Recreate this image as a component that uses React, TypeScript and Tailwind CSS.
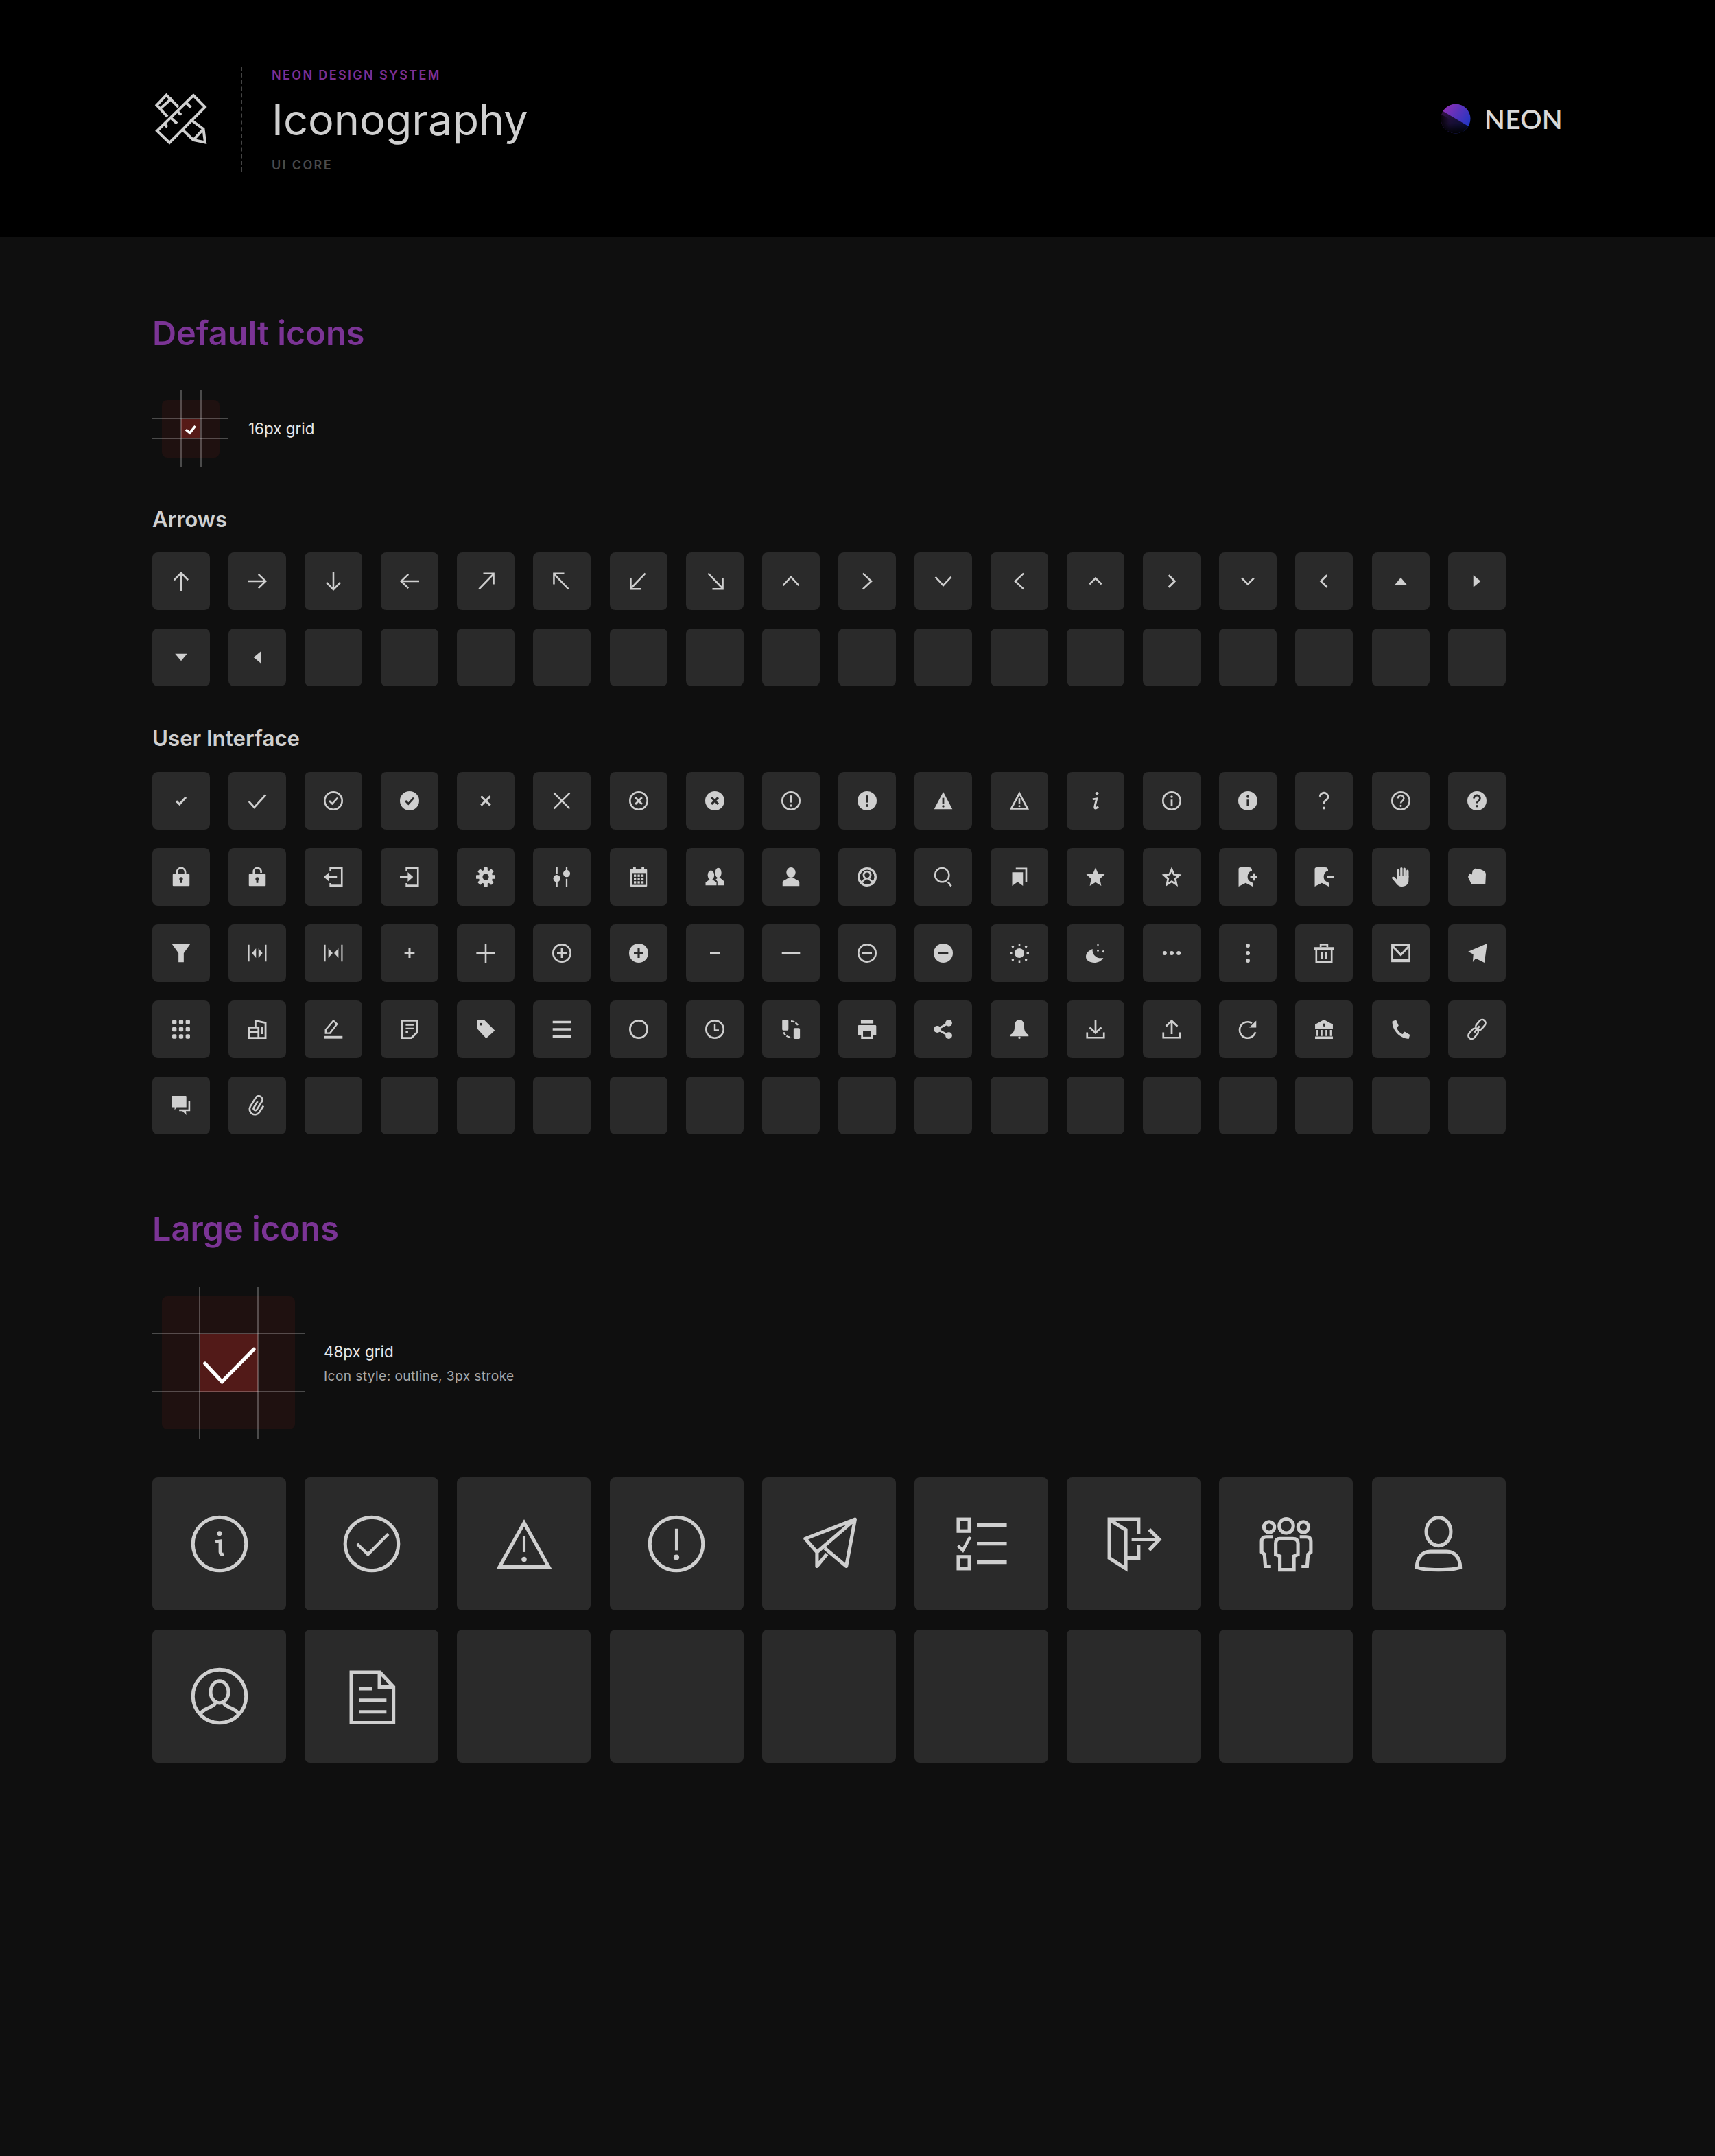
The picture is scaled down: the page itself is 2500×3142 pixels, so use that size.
import type { ReactNode } from "react";

const DARK = "#2a2a2a";
const fill = { fill: "currentColor", stroke: "none" };
const dark = { fill: DARK, stroke: "none" };

const Ring = () => <circle cx="8" cy="8" r="7.25" strokeWidth="1.5" />;
const Solid = () => <circle cx="8" cy="8" r="8" {...fill} />;

const star = "8,.3 10.2,5.3 15.7,5.9 11.6,9.6 12.8,15.4 8,12.4 3.2,15.4 4.4,9.6 .3,5.9 5.8,5.3";
const bookmarkCut = "M.3 16V1.5Q.3 0 2 0H9Q11.5 0 11.5 2.8C8.5 3.5 7.8 6 7.8 8C7.8 10.5 9.5 12 12 12.8V16L6.2 13Z";
const lockBody = <rect x="1" y="5.6" width="14" height="10" rx=".6" {...fill} />;
const keyhole = (
  <>
    <circle cx="8" cy="9.6" r="1.5" {...dark} />
    <rect x="7.2" y="10" width="1.6" height="3" {...dark} />
  </>
);

const arrowIcons: ReactNode[] = [
  <path d="M8 16V1M2.2 7L8 1L13.8 7" />,
  <path d="M0 8H15M9 2.2L15 8L9 13.8" />,
  <path d="M8 0V15M2.2 9L8 15L13.8 9" />,
  <path d="M16 8H1M7 2.2L1 8L7 13.8" />,
  <path d="M2.5 14.5L14.5 2M6 1.6H14.6V10.5" />,
  <path d="M13.5 14.5L1.5 2M10 1.6H1.4V10.5" />,
  <path d="M13.5 1.5L1.5 14M10 14.4H1.4V5.5" />,
  <path d="M2.5 1.5L14.5 14M6 14.4H14.6V5.5" />,
  <path d="M1.5 11.5L8 4.5L14.5 11.5" />,
  <path d="M4.5 1.5L11.5 8L4.5 14.5" />,
  <path d="M1.5 4.5L8 11.5L14.5 4.5" />,
  <path d="M11.5 1.5L4.5 8L11.5 14.5" />,
  <path d="M3 10.5L8 5.5L13 10.5" strokeWidth="1.6" />,
  <path d="M5.5 3L10.5 8L5.5 13" strokeWidth="1.6" />,
  <path d="M3 5.5L8 10.5L13 5.5" strokeWidth="1.6" />,
  <path d="M10.5 3L5.5 8L10.5 13" strokeWidth="1.6" />,
  <polygon points="3,11 8,5 13,11" {...fill} />,
  <polygon points="5,3 11,8 5,13" {...fill} />,
  <polygon points="3,5 8,11 13,5" {...fill} />,
  <polygon points="11,3 5,8 11,13" {...fill} />,
];

const uiIcons: ReactNode[] = [
  // row 1
  <path d="M4 8.2L6.7 10.9L12 5" strokeWidth="1.8" />,
  <path d="M1 8.5L5.5 13.5L15 3" strokeWidth="1.55" />,
  <>
    <Ring />
    <path d="M4.6 8L7 10.5L11.5 5.5" strokeWidth="1.5" />
  </>,
  <>
    <Solid />
    <path d="M4.6 8L7 10.5L11.5 5.5" stroke={DARK} strokeWidth="1.7" />
  </>,
  <path d="M4.2 4.2L11.8 11.8M11.8 4.2L4.2 11.8" strokeWidth="1.8" />,
  <path d="M1.5 1.5L14.5 14.5M14.5 1.5L1.5 14.5" />,
  <>
    <Ring />
    <path d="M5.2 5.2L10.8 10.8M10.8 5.2L5.2 10.8" strokeWidth="1.6" />
  </>,
  <>
    <Solid />
    <path d="M5.2 5.2L10.8 10.8M10.8 5.2L5.2 10.8" stroke={DARK} strokeWidth="1.8" />
  </>,
  <>
    <Ring />
    <path d="M8 3.5V9.5" strokeWidth="1.6" />
    <circle cx="8" cy="12" r="1" {...fill} />
  </>,
  <>
    <Solid />
    <path d="M8 3.5V9.5" stroke={DARK} strokeWidth="1.7" />
    <circle cx="8" cy="12" r="1.1" {...dark} />
  </>,
  <>
    <polygon points="8,.6 15.6,15 .4,15" {...fill} />
    <path d="M8 5.5V10.5" stroke={DARK} strokeWidth="1.6" />
    <circle cx="8" cy="12.6" r="1" {...dark} />
  </>,
  <>
    <polygon points="8,1.8 14.8,14.6 1.2,14.6" strokeWidth="1.5" />
    <path d="M8 5.8V10.5" strokeWidth="1.5" />
    <circle cx="8" cy="12.4" r=".9" {...fill} />
  </>,
  <>
    <circle cx="9.2" cy="1.9" r="1.3" {...fill} />
    <path d="M5.6 6.8L9 6.2L7.4 12.6Q7 14.6 8.4 14.2L10.4 13" strokeWidth="1.7" />
  </>,
  <>
    <Ring />
    <circle cx="8" cy="4.6" r="1" {...fill} />
    <path d="M8 7V12.2" strokeWidth="1.6" />
  </>,
  <>
    <Solid />
    <circle cx="8" cy="4.4" r="1.1" {...dark} />
    <path d="M8 7V12.4" stroke={DARK} strokeWidth="1.8" />
  </>,
  <>
    <path d="M4.7 4.5A3.3 3.3 0 1 1 9.6 7.5C8.5 8.2 8 9 8 10.5" strokeWidth="1.6" />
    <circle cx="8" cy="14" r="1.1" {...fill} />
  </>,
  <>
    <Ring />
    <path d="M5.5 6A2.5 2.5 0 1 1 9.3 8.1C8.4 8.7 8 9.2 8 10" strokeWidth="1.4" />
    <circle cx="8" cy="12.2" r=".9" {...fill} />
  </>,
  <>
    <Solid />
    <path d="M5.5 6A2.5 2.5 0 1 1 9.3 8.1C8.4 8.7 8 9.2 8 10" stroke={DARK} strokeWidth="1.6" />
    <circle cx="8" cy="12.4" r="1" {...dark} />
  </>,
  // row 2
  <>
    {lockBody}
    <path d="M4.5 6V4A3.5 3.5 0 0 1 11.5 4V6" strokeWidth="1.5" />
    {keyhole}
  </>,
  <>
    {lockBody}
    <path d="M5 6V3.6A3.1 3.1 0 0 1 11.2 3.6V4.6" strokeWidth="1.5" />
    {keyhole}
  </>,
  <>
    <path d="M5.5 2.8V.8H15V15.2H5.5V13.2" strokeWidth="1.5" />
    <path d="M11 8H1.5" strokeWidth="1.8" />
    <polygon points="0,8 4.5,4 4.5,12" {...fill} />
  </>,
  <>
    <path d="M5.5 2.8V.8H15V15.2H5.5V13.2" strokeWidth="1.5" />
    <path d="M0 8H8" strokeWidth="1.8" />
    <polygon points="11,8 6.5,4 6.5,12" {...fill} />
  </>,
  <>
    <circle cx="8" cy="8" r="5.8" {...fill} />
    {[0, 45, 90, 135, 180, 225, 270, 315].map((a) => (
      <rect key={a} x="6.4" y="0" width="3.2" height="3.6" rx=".5" transform={`rotate(${a} 8 8)`} {...fill} />
    ))}
    <circle cx="8" cy="8" r="2.6" {...dark} />
  </>,
  <>
    <path d="M3.8 0V5.5M3.8 11V16M12 0V3M12 9.5V16" strokeWidth="1.3" />
    <ellipse cx="3.8" cy="9.3" rx="2.9" ry="3" {...fill} />
    <ellipse cx="12" cy="5.2" rx="2.9" ry="3" {...fill} />
  </>,
  <>
    <rect x="1" y="1.5" width="14" height="14.5" rx=".6" {...fill} />
    <rect x="3.4" y="0" width="2.2" height="3" {...fill} />
    <rect x="10.4" y="0" width="2.2" height="3" {...fill} />
    <rect x="2.3" y="4.8" width="11.4" height="9.8" {...dark} />
    {[4, 7.1, 10.2].flatMap((x) =>
      [6, 8.8, 11.6].map((y) => <rect key={`${x}-${y}`} x={x} y={y} width="1.9" height="1.9" {...fill} />)
    )}
  </>,
  <>
    <ellipse cx="4.8" cy="6.6" rx="2.7" ry="4" {...fill} />
    <ellipse cx="10.9" cy="4.6" rx="2.6" ry="4.2" {...fill} />
    <path d="M.3 15V12.4L3.4 10.4H6.4L9.4 12.4V15Z" {...fill} />
    <path d="M10.2 15V11.8L8.8 10L10.5 8.8H12.5L15.7 11.5V15Z" {...fill} />
  </>,
  <>
    <ellipse cx="8" cy="4.3" rx="3.8" ry="4.3" {...fill} />
    <path d="M1 15.6V12.4C1 10.8 4.5 10.4 5.8 8.6H10.2C11.5 10.4 15 10.8 15 12.4V15.6Z" {...fill} />
  </>,
  <>
    <circle cx="8" cy="8" r="7" strokeWidth="2" />
    <circle cx="8" cy="6.4" r="2.9" strokeWidth="1.6" />
    <path d="M3 13C4 11 6 10.6 6.4 9.4M13 13C12 11 10 10.6 9.6 9.4" strokeWidth="1.6" />
  </>,
  <>
    <circle cx="7" cy="6.4" r="5.8" strokeWidth="1.45" />
    <path d="M12 12.2L14.6 15.6" strokeWidth="1.6" />
  </>,
  <>
    <path d="M2 15.4V4.2H11V15.4L6.5 12.2Z" {...fill} />
    <path d="M5 1.1H13.7V12.5" strokeWidth="1.5" />
  </>,
  <polygon points={star} {...fill} strokeLinejoin="round" />,
  <polygon points="8,1.6 9.8,5.9 14.4,6.5 11,9.6 12,14.3 8,11.8 4,14.3 5,9.6 1.6,6.5 6.2,5.9" strokeWidth="1.6" />,
  <>
    <path d={bookmarkCut} {...fill} />
    <path d="M13 5V11M10 8H16" strokeWidth="1.5" />
  </>,
  <>
    <path d={bookmarkCut} {...fill} />
    <path d="M10.5 8H16" strokeWidth="1.8" />
  </>,
  <>
    <path d="M6 8V2.4M8.5 8V.9M11 8V1.2M13.6 8V3" strokeWidth="1.9" strokeLinecap="round" />
    <path d="M5 7H14.5V11C14.5 14 12.3 16 9.2 16C6.5 16 5 14.5 3.5 12.5L.5 9C.5 7.8 2.4 7.6 3 8.3L5 10.5Z" {...fill} />
  </>,
  <path d="M1.8 5L3.8 6L4.4 2.6L6.8 .9L8.4 1.6L9.6 1.2L12.6 2.4C14.2 3 15.4 4 15.4 6L15 13.8H3.3L.6 8Z" {...fill} />,
  // row 3
  <path d="M.4 .4H15.6L10.2 8V15.6H5.8V8Z" {...fill} />,
  <>
    <path d="M.9 1V15M15.1 1V15" strokeWidth="1.2" />
    <polygon points="7,4 7,12 3.6,8" {...fill} />
    <polygon points="9,4 9,12 12.4,8" {...fill} />
  </>,
  <>
    <path d="M.9 1V15M15.1 1V15" strokeWidth="1.2" />
    <polygon points="3.8,4 3.8,12 7.4,8" {...fill} />
    <polygon points="12.2,4 12.2,12 8.6,8" {...fill} />
  </>,
  <path d="M8 4V12M3.8 8H12.2" strokeWidth="1.7" />,
  <path d="M8 0V16M.2 8H15.8" strokeWidth="1.5" />,
  <>
    <Ring />
    <path d="M8 4V12M4 8H12" strokeWidth="1.6" />
  </>,
  <>
    <Solid />
    <path d="M8 4V12M4 8H12" stroke={DARK} strokeWidth="1.8" />
  </>,
  <path d="M4 8H12" strokeWidth="2" />,
  <path d="M.4 8H15.6" strokeWidth="2" />,
  <>
    <Ring />
    <path d="M4 8H12" strokeWidth="2" />
  </>,
  <>
    <Solid />
    <path d="M3.8 8H12.2" stroke={DARK} strokeWidth="2" />
  </>,
  <>
    <circle cx="8" cy="8" r="4" {...fill} />
    <path d="M8 0V2M8 14V16M0 8H2M14 8H16" strokeWidth="1.5" />
    {[
      [2.5, 2.5],
      [13.5, 2.5],
      [2.5, 13.5],
      [13.5, 13.5],
    ].map(([x, y]) => (
      <circle key={`${x}${y}`} cx={x} cy={y} r="1" {...fill} />
    ))}
  </>,
  <>
    <path d="M5.5 4.5C2 6 0 8 0 11C0 14 3 16 7 16C10 16 13 14.5 14.5 12C9 13 5 9.5 5.5 4.5Z" {...fill} />
    <path d="M10 0V2.2" strokeWidth="1.2" />
    <circle cx="10" cy="6" r=".8" {...fill} />
    <circle cx="14.5" cy="6.6" r=".9" {...fill} />
  </>,
  <>
    <circle cx="2.2" cy="8" r="1.7" {...fill} />
    <circle cx="8" cy="8" r="1.7" {...fill} />
    <circle cx="13.8" cy="8" r="1.7" {...fill} />
  </>,
  <>
    <circle cx="8" cy="1.7" r="1.7" {...fill} />
    <circle cx="8" cy="8" r="1.7" {...fill} />
    <circle cx="8" cy="14.3" r="1.7" {...fill} />
  </>,
  <>
    <path d="M5.2 3V.8H10.8V3" strokeWidth="1.5" />
    <rect x="0" y="3" width="16" height="2.2" {...fill} />
    <path d="M1.6 5V15.2H14.4V5M6.1 7.2V13M9.9 7.2V13" strokeWidth="1.5" />
  </>,
  <>
    <rect x=".8" y="1.2" width="14.4" height="13.6" strokeWidth="1.5" />
    <path d="M1 2L8 9.5L15 2M.8 13.6H15.2" strokeWidth="1.7" />
  </>,
  <polygon points="16.4,0 .7,6.7 5,9 4.5,15.4 7,12.4 14.2,16" {...fill} strokeLinejoin="round" />,
  // row 4
  <>
    {[.6, 6.2, 11.8].flatMap((x) =>
      [.2, 6.2, 12.2].map((y) => <rect key={`${x}-${y}`} x={x} y={y} width="3.6" height="3.6" rx=".9" {...fill} />)
    )}
  </>,
  <path d="M6.5 6V.9L14.9 2.6V15.2H1V6.5H9V15.2M11.8 6V12M1 10.5H9" strokeWidth="1.6" />,
  <>
    <path d="M1.6 8.4L8 .9L11 3.6L5.2 11.2H1.6Z" strokeWidth="1.4" />
    <rect x=".4" y="13.6" width="15.2" height="2.2" {...fill} />
  </>,
  <>
    <path d="M1.8 .8H14.2V10.6L9.6 15.2H1.8Z" strokeWidth="1.6" />
    <path d="M4.8 4.4H11.4M4.8 7.4H11.4M4.8 10.4H6.8" strokeWidth="1.3" />
  </>,
  <>
    <path d="M.6 .4H7L15.6 9L8.4 15.6L.6 7.2Z" {...fill} strokeLinejoin="round" />
    <circle cx="4" cy="3.8" r="1.1" {...dark} />
  </>,
  <path d="M.4 2H15.6M.4 8H15.6M.4 14H15.6" strokeWidth="2.1" />,
  <circle cx="8" cy="8" r="7.2" strokeWidth="1.6" />,
  <>
    <Ring />
    <path d="M8 4V8.8H11.4" strokeWidth="1.4" />
  </>,
  <>
    <rect x=".7" y="0" width="5.2" height="9" rx="1" {...fill} />
    <rect x="10.2" y="7" width="5.3" height="9" rx="1" {...fill} />
    <path d="M8 1.2C11 1.6 13.4 3 14 5.6M2 10.4C2.6 13 5 14.4 8 14.9" strokeWidth="1.3" strokeDasharray="3 .9" />
  </>,
  <>
    <rect x="2.8" y="0" width="10.4" height="3.2" {...fill} />
    <rect x=".4" y="4.6" width="15.2" height="8.6" rx=".8" {...fill} />
    <rect x="3" y="8" width="10" height="8" {...fill} />
    <rect x="4.6" y="9.2" width="6.8" height="5" {...dark} />
  </>,
  <>
    <circle cx="12.6" cy="2.8" r="2.8" {...fill} />
    <circle cx="3" cy="8" r="2.9" {...fill} />
    <circle cx="12.6" cy="13.2" r="2.8" {...fill} />
    <path d="M12.6 2.8L3 8L12.6 13.2" strokeWidth="1.7" />
  </>,
  <>
    <path d="M8 0C11 0 12 3 12 6C12 9.5 13 11 15.6 12.6V13.8H.4V12.6C3 11 4 9.5 4 6C4 3 5 0 8 0Z" {...fill} />
    <circle cx="8" cy="15" r="1" {...fill} />
  </>,
  <path d="M1 10.5V15H15V10.5M8 0V11M3.2 6.4L8 11L12.8 6.4" strokeWidth="1.55" />,
  <path d="M1 10.5V15H15V10.5M8 12V1M3.2 5.6L8 1L12.8 5.6" strokeWidth="1.55" />,
  <>
    <path d="M14.3 10.4A6.7 6.7 0 1 1 11.4 2.9" strokeWidth="1.5" />
    <polygon points="9.2,6.6 15,6.6 15,.9" {...fill} />
  </>,
  <>
    <path d="M8 0L15.4 4V7.4H.6V4Z" {...fill} />
    <circle cx="8" cy="4.2" r="1" {...dark} />
    <rect x="7.6" y="4" width=".9" height="2" {...dark} />
    <path d="M2.4 8.5V13.6M6.1 8.5V13.6M9.9 8.5V13.6M13.6 8.5V13.6" strokeWidth="1.3" />
    <rect x=".6" y="14" width="14.8" height="2" {...fill} />
  </>,
  <path d="M.9 1.4L4 .2L6.2 5L4.6 6.6C5.2 9 7.4 11.4 9.6 12L11.2 10L15.6 12.6L14.6 16C7 16 .4 8 .9 1.4Z" {...fill} />,
  <g transform="rotate(40 8 8)" strokeWidth="1.5">
    <rect x="5.2" y="-1.6" width="5.6" height="9.6" rx="2.8" />
    <rect x="5.2" y="8" width="5.6" height="9.6" rx="2.8" />
    <path d="M8 4.6V11.4" />
  </g>,
  // row 5
  <>
    <path d="M0 .6Q0 0 .6 0H11.8Q12.4 0 12.4 .6V9.4H4.2L2.6 11.8V9.4H0Z" {...fill} />
    <path d="M14.8 4.2V12H6.4" strokeWidth="1.5" />
    <polygon points="8.8,12.4 12,12.4 12.4,16" {...fill} />
  </>,
  <g transform="rotate(32 8 8)" strokeWidth="1.5">
    <path d="M6.5 5V11A1.5 1.5 0 0 0 9.5 11V3.2A3 3 0 0 0 3.5 3.2V11.6A4.5 4.5 0 0 0 12.5 11.6V5.5" />
  </g>,
];

const largeIcons: ReactNode[] = [
  <>
    <circle cx="24" cy="24" r="22.7" />
    <circle cx="24" cy="15" r="2" fill="currentColor" stroke="none" />
    <path d="M20.5 22L24.5 21.5V31Q24.5 33.5 27.5 32.5" strokeWidth="2.6" />
  </>,
  <>
    <circle cx="24" cy="24" r="22.7" />
    <path d="M11.5 24L20.7 33L38 15.5" strokeWidth="2.6" />
  </>,
  <>
    <polygon points="24,6 45,43.5 3,43.5" />
    <path d="M24 17.5V31" strokeWidth="2.4" />
    <circle cx="24" cy="37.2" r="2.2" fill="currentColor" stroke="none" />
  </>,
  <>
    <circle cx="24" cy="24" r="22.7" />
    <path d="M24 11V29.5" strokeWidth="2.4" />
    <circle cx="24" cy="35.4" r="2.4" fill="currentColor" stroke="none" />
  </>,
  <path d="M46.5 3L4 19.5L14 31L46.5 3L39 43L20.5 27.5M14 29V43L22.5 32.5" strokeLinejoin="round" />,
  <>
    <rect x="4.7" y="3" width="9.4" height="10" />
    <path d="M20.5 8H46M20.5 23.8H46M20.5 39.6H46" />
    <path d="M4.3 25.5L8.5 29.5L14.8 18" strokeWidth="2.6" />
    <rect x="4.7" y="35" width="9.4" height="10" />
  </>,
  <>
    <path d="M28 15.5V3H3V36L17 45V12L3.5 3.5M28 25V36H17" />
    <path d="M22 20.2H45M37 11.6L45.6 20.2L37 29.3" />
  </>,
  <>
    <circle cx="24" cy="8.6" r="6" />
    <circle cx="9.4" cy="9.6" r="4.5" />
    <circle cx="38.6" cy="9.6" r="4.5" />
    <path d="M18.5 19.5H29.5Q34 19.5 34 23.5V33L30.5 34.5V46H18.5V34.5L15 33V23.5Q15 19.5 18.5 19.5Z" />
    <path d="M12.5 18H7Q3 18 3 22V31L5.4 33L6.2 43H11M35.5 18H41Q45 18 45 22V31L42.6 33L41.8 43H37" />
  </>,
  <>
    <ellipse cx="24" cy="13.5" rx="10.5" ry="12" />
    <path d="M17 30.5H31C38 30.5 42.5 36 42.5 44C36 46.7 12 46.7 5.5 44C5.5 36 10 30.5 17 30.5Z" />
  </>,
  <>
    <circle cx="24" cy="24" r="22.7" />
    <ellipse cx="24" cy="20.4" rx="7.6" ry="9.4" />
    <path d="M8 39C10 34 18 34 20.5 30M27.5 30C30 34 38 34 40 39" />
  </>,
  <>
    <path d="M6.5 3.5H31L42.5 16V46.5H6.5Z" />
    <path d="M30.5 4V16.2H43" />
    <path d="M13 17.5H24M13 27.4H36.5M13 37.3H36.5" />
  </>,
];

function Icon16({ children }: { children: ReactNode }) {
  return (
    <svg viewBox="0 0 16 16" className="w-7 h-7 overflow-visible text-[#cfcfcf]" fill="none" stroke="currentColor" strokeWidth="1.45">
      {children}
    </svg>
  );
}

function IconGrid({ icons, blanks }: { icons: ReactNode[]; blanks: number }) {
  return (
    <div className="grid grid-cols-[repeat(18,84px)] gap-y-[27px] gap-x-[27.1px]">
      {icons.map((icon, i) => (
        <div key={i} className="w-[84px] h-[84px] rounded-lg bg-[#2a2a2a] flex items-center justify-center">
          <Icon16>{icon}</Icon16>
        </div>
      ))}
      {Array.from({ length: blanks }).map((_, i) => (
        <div key={i} className="w-[84px] h-[84px] rounded-lg bg-[#2a2a2a]" />
      ))}
    </div>
  );
}

function LargeGrid() {
  return (
    <div className="grid grid-cols-[repeat(9,195px)] gap-y-[28px] gap-x-[27.2px]">
      {largeIcons.map((icon, i) => (
        <div key={i} className="w-[195px] h-[194px] rounded-lg bg-[#2a2a2a] flex items-center justify-center">
          <svg viewBox="0 0 48 48" className="w-[82px] h-[82px] overflow-visible text-[#cfcfcf]" fill="none" stroke="currentColor" strokeWidth="3">
            {icon}
          </svg>
        </div>
      ))}
      {Array.from({ length: 7 }).map((_, i) => (
        <div key={i} className="w-[195px] h-[194px] rounded-lg bg-[#2a2a2a]" />
      ))}
    </div>
  );
}

function SmallSpec() {
  return (
    <div className="relative w-[111px] h-[111px] flex items-center justify-center">
      <div className="w-[84px] h-[84px] rounded-lg bg-[#1f1110] flex items-center justify-center">
        <div className="w-7 h-7 bg-[#561a17] flex items-center justify-center">
          <svg viewBox="0 0 16 16" className="w-7 h-7" fill="none" stroke="#ffffff" strokeWidth="2">
            <path d="M4 8.6L7.3 11.4L11.8 5.7" />
          </svg>
        </div>
      </div>
      <div className="absolute left-[41px] top-0 w-[2px] h-full bg-white/25" />
      <div className="absolute left-[70px] top-0 w-[2px] h-full bg-white/25" />
      <div className="absolute top-[40px] left-0 h-[2px] w-full bg-white/25" />
      <div className="absolute top-[69px] left-0 h-[2px] w-full bg-white/25" />
    </div>
  );
}

function LargeSpec() {
  return (
    <div className="relative w-[222px] h-[222px] flex items-center justify-center">
      <div className="w-[194px] h-[194px] rounded-lg bg-[#1f1110] flex items-center justify-center">
        <div className="w-[85px] h-[85px] bg-[#521a18] flex items-center justify-center">
          <svg viewBox="0 0 48 48" className="w-[85px] h-[85px]" fill="none" stroke="#ffffff" strokeWidth="3" strokeLinecap="round">
            <path d="M4.4 24.3L18.4 39.4L44.6 12.6" />
          </svg>
        </div>
      </div>
      <div className="absolute left-[68px] top-0 w-[2px] h-full bg-white/25" />
      <div className="absolute left-[153px] top-0 w-[2px] h-full bg-white/25" />
      <div className="absolute top-[67px] left-0 h-[2px] w-full bg-white/25" />
      <div className="absolute top-[152px] left-0 h-[2px] w-full bg-white/25" />
    </div>
  );
}

function ToolsLogo() {
  return (
    <svg viewBox="0 0 74 73" className="w-[74px] h-[73px] ml-[5px] overflow-visible" fill="none" stroke="#cfcfcf" strokeWidth="4">
      <polygon points="54.8,2 71.8,19 20,71 2,53.7" />
      <path d="M44.5 13L51.2 19.7M31 24.7L37 30.5M22 34.7L31 43M12.4 43.7L16.8 48" />
      <path d="M17 33L1.5 16.3L15.5 1.5L33 19" />
      <path d="M6.6 21.3L23.5 6.3" />
      <path d="M50.5 37L69.5 51L72 70.5L54.8 67L40 53" />
      <path d="M54.8 67L69.5 51" />
    </svg>
  );
}

function NeonLogo() {
  return (
    <div className="flex items-center gap-[20px]">
      <svg viewBox="0 0 44 44" className="w-11 h-11">
        <defs>
          <linearGradient id="neonBall" x1="0" y1="0" x2="1" y2="0.7">
            <stop offset="0.1" stopColor="#8f2fb3" />
            <stop offset="1" stopColor="#1c36c4" />
          </linearGradient>
          <linearGradient id="neonShade" x1="0.45" y1="0.1" x2="0.5" y2="1">
            <stop offset="0" stopColor="#000000" stopOpacity="0.62" />
            <stop offset="0.55" stopColor="#000000" stopOpacity="0.72" />
            <stop offset="1" stopColor="#000000" stopOpacity="1" />
          </linearGradient>
          <linearGradient id="neonSide" x1="0" y1="0" x2="1" y2="0">
            <stop offset="0" stopColor="#000000" stopOpacity="0.9" />
            <stop offset="0.3" stopColor="#000000" stopOpacity="0" />
          </linearGradient>
          <clipPath id="neonClip">
            <circle cx="22" cy="22" r="21.5" />
          </clipPath>
        </defs>
        <circle cx="22" cy="22" r="21.5" fill="url(#neonBall)" />
        <polygon points="-5,6 44,35 44,44 -5,44" fill="url(#neonShade)" clipPath="url(#neonClip)" />
        <polygon points="0,15 44,41 44,44 0,44" fill="url(#neonSide)" clipPath="url(#neonClip)" />
      </svg>
      <span className="font-['Lato',sans-serif] font-semibold text-[39px] leading-none tracking-[0.005em] text-[#d8d8d8]">NEON</span>
    </div>
  );
}

export default function App() {
  return (
    <div className="min-h-[3142px] bg-[#0f0f0f] font-['Inter',sans-serif]">
      <header className="h-[346px] bg-black px-[222px] flex items-center justify-between">
        <div className="flex items-center">
          <ToolsLogo />
          <div className="ml-[50px] h-[153px] border-l-2 border-dashed border-[#444444]" />
          <div className="ml-[43px] pt-[4px]">
            <p className="text-[18px] leading-none font-semibold tracking-[0.13em] text-[#7b2f93]">NEON DESIGN SYSTEM</p>
            <h1 className="mt-[17px] text-[63px] leading-[76px] font-normal text-[#cfcfcf]">Iconography</h1>
            <p className="mt-[20px] text-[18px] leading-none font-semibold tracking-[0.13em] text-[#4a4a4a]">UI CORE</p>
          </div>
        </div>
        <NeonLogo />
      </header>

      <main className="pl-[222px] pt-[116px]">
        <h2 className="text-[48.6px] leading-[48px] font-semibold text-[#7b3495]">Default icons</h2>
        <div className="mt-[59px] flex items-center gap-[29px]">
          <SmallSpec />
          <span className="text-[22.4px] text-[#e8e8e8]">16px grid</span>
        </div>

        <h3 className="mt-[62px] text-[31.25px] leading-[31px] font-semibold text-[#cfcfcf]">Arrows</h3>
        <div className="mt-[32px]">
          <IconGrid icons={arrowIcons} blanks={16} />
        </div>

        <h3 className="mt-[61px] text-[31.25px] leading-[31px] font-semibold text-[#cfcfcf]">User Interface</h3>
        <div className="mt-[33px]">
          <IconGrid icons={uiIcons} blanks={16} />
        </div>

        <h2 className="mt-[114px] text-[48.6px] leading-[48px] font-semibold text-[#7b3495]">Large icons</h2>
        <div className="mt-[60px] flex items-center gap-[28px]">
          <LargeSpec />
          <div>
            <p className="text-[22.4px] leading-[34px] text-[#e8e8e8]">48px grid</p>
            <p className="mt-1 text-[19.2px] leading-[28px] tracking-[0.02em] text-[#a8a8a8]">Icon style: outline, 3px stroke</p>
          </div>
        </div>

        <div className="mt-[56px]">
          <LargeGrid />
        </div>
      </main>
    </div>
  );
}
